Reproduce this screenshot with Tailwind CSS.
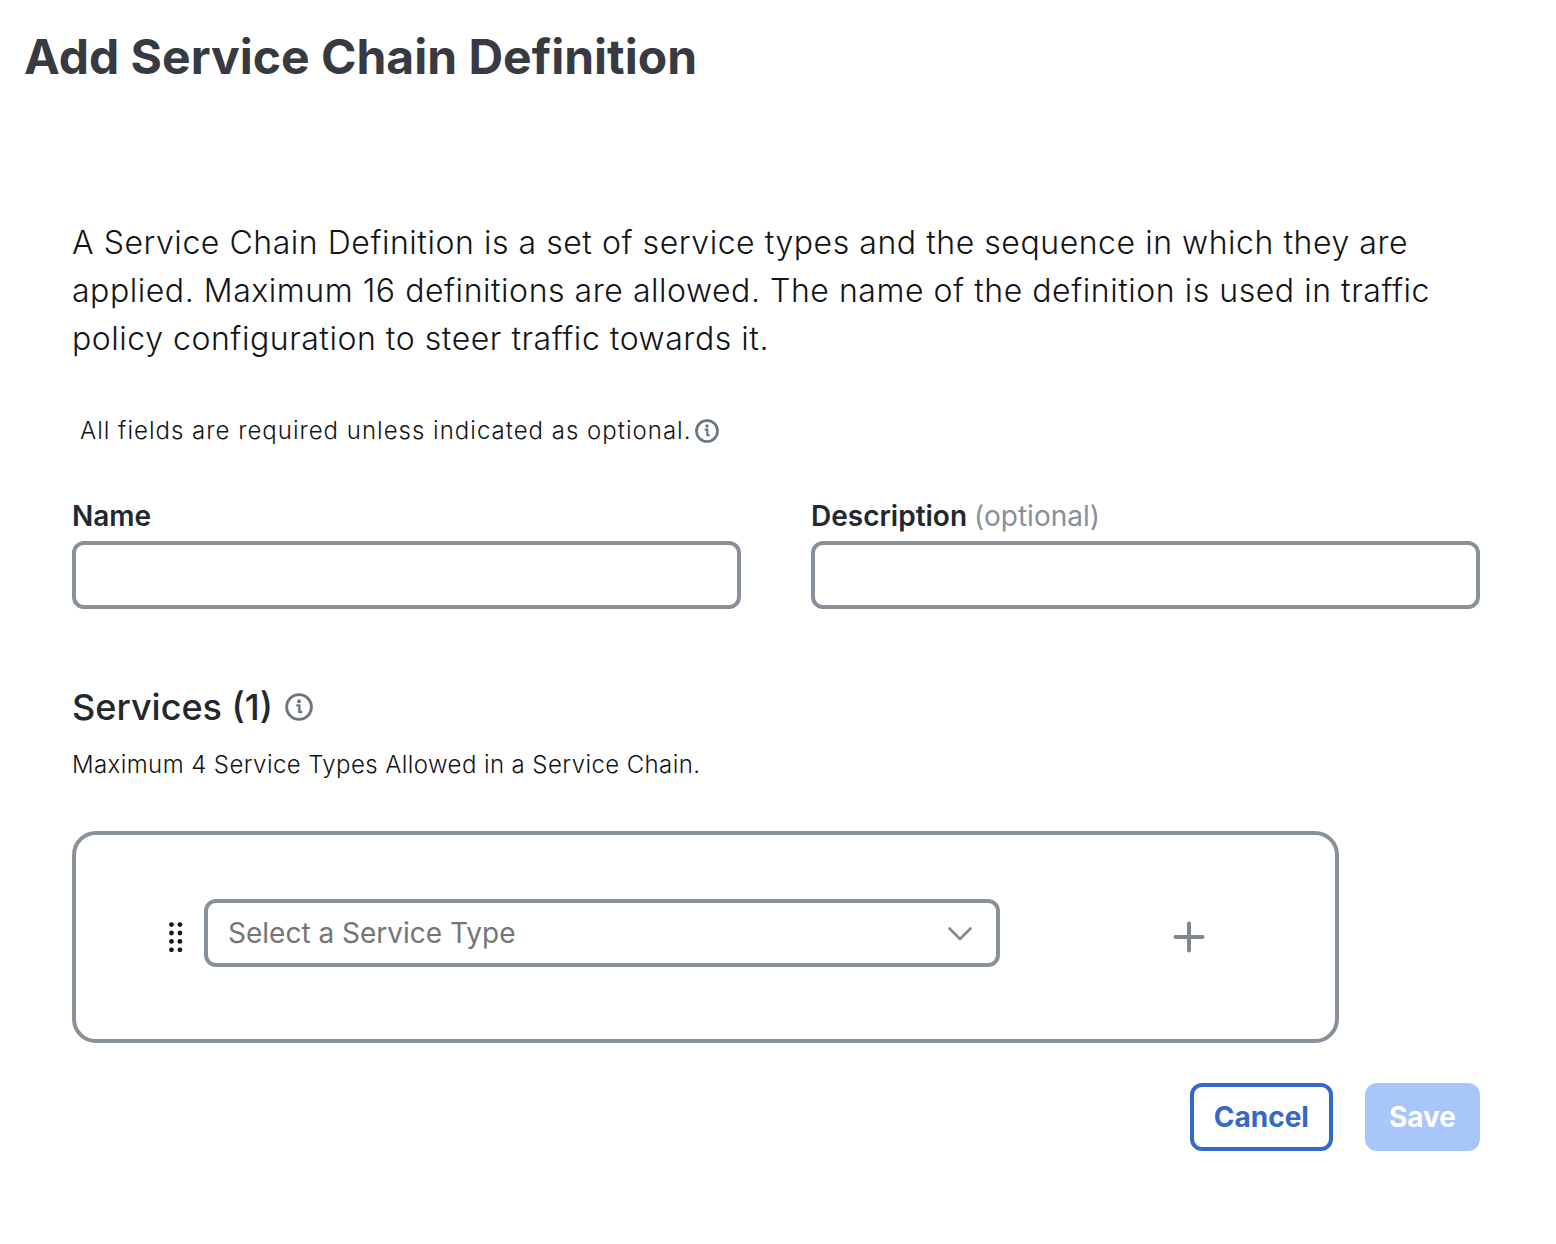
<!DOCTYPE html>
<html lang="en">
<head>
<meta charset="utf-8">
<title>Add Service Chain Definition</title>
<script src="https://cdn.jsdelivr.net/npm/@tailwindcss/browser@4"></script>
</head>
<body class="bg-white font-['Inter',sans-serif] text-[#23282e]">
<main>
  <h1 class="px-6 pt-7 text-5xl leading-[58px] font-bold text-[#373a41]">Add Service Chain Definition</h1>
  <form class="pt-[133px] pr-[76px] pb-[90px] pl-[72px]">
    <p class="text-[32px] leading-12 font-light tracking-[0.017em] text-[#121417]">A Service Chain Definition is a set of service types and the sequence in which they are applied. Maximum 16 definitions are allowed. The name of the definition is used in traffic policy configuration to steer traffic towards it.</p>
    <p class="mt-[50px] ml-2 flex items-center gap-1 text-2xl leading-9 font-light tracking-[1px] text-[#121417]">All fields are required unless indicated as optional.
      <svg class="size-6" viewBox="0 0 24 24" fill="none" stroke="#6c747d" stroke-width="2.7" aria-hidden="true"><circle cx="12" cy="12" r="10.5"/><path d="M10.5 10.6H12.3V16.2H13.9" stroke-width="2.1" stroke-linecap="round" stroke-linejoin="round"/><circle cx="12" cy="7" r="1.7" fill="#6c747d" stroke="none"/></svg>
    </p>
    <div class="mt-[47px] grid grid-cols-2 gap-[70px]">
      <div class="flex flex-col gap-[5px]">
        <label for="name" class="text-[28px] leading-10 font-semibold">Name</label>
        <input id="name" type="text" class="h-[68px] w-full rounded-xl border-4 border-[#889099] px-5 text-[28px]">
      </div>
      <div class="flex flex-col gap-[5px]">
        <label for="desc" class="text-[28px] leading-10 font-semibold">Description <span class="font-normal text-[#889099]">(optional)</span></label>
        <input id="desc" type="text" class="h-[68px] w-full rounded-xl border-4 border-[#889099] px-5 text-[28px]">
      </div>
    </div>
    <h2 class="mt-[74px] flex items-center gap-3 text-4xl leading-12 font-medium">Services (1)
      <svg class="size-7" viewBox="0 0 24 24" fill="none" stroke="#6c747d" stroke-width="2.5" aria-hidden="true"><circle cx="12" cy="12" r="10.6"/><path d="M10.5 10.6H12.3V16.2H13.9" stroke-width="2.1" stroke-linecap="round" stroke-linejoin="round"/><circle cx="12" cy="7" r="1.7" fill="#6c747d" stroke="none"/></svg>
    </h2>
    <p class="mt-4 text-2xl leading-9 font-light tracking-[0.017em] text-[#121417]">Maximum 4 Service Types Allowed in a Service Chain.</p>
    <div class="mt-12 mr-[141px] flex h-[212px] items-center rounded-3xl border-4 border-[#889099] pl-[92px]">
      <svg class="h-8 w-4 shrink-0" viewBox="0 0 16 32" fill="#121417" aria-hidden="true">
        <circle cx="3.5" cy="3.6" r="2.4"/><circle cx="11.9" cy="3.6" r="2.4"/>
        <circle cx="3.5" cy="12" r="2.4"/><circle cx="11.9" cy="12" r="2.4"/>
        <circle cx="3.5" cy="20.4" r="2.4"/><circle cx="11.9" cy="20.4" r="2.4"/>
        <circle cx="3.5" cy="28.8" r="2.4"/><circle cx="11.9" cy="28.8" r="2.4"/>
      </svg>
      <div class="ml-5 w-[796px] pb-2">
        <div class="relative">
          <select aria-label="Service type" class="block h-[68px] w-full appearance-none rounded-xl border-4 border-[#889099] px-5 text-[28px] text-[#757575]"><option>Select a Service Type</option></select>
          <svg class="pointer-events-none absolute top-5 right-6 h-7 w-8" viewBox="0 0 32 28" fill="none" stroke="#7f8790" stroke-width="2.6" stroke-linecap="round" stroke-linejoin="round" aria-hidden="true"><path d="M5.5 9.5 16 20 26.5 9.5"/></svg>
        </div>
      </div>
      <button type="button" aria-label="Add service" class="ml-[173px]">
        <svg class="block size-8" viewBox="0 0 32 32" fill="none" stroke="#7f8790" stroke-width="4" stroke-linecap="round" aria-hidden="true"><path d="M16 2.5v27M2.5 16h27"/></svg>
      </button>
    </div>
    <div class="mt-10 flex justify-end gap-8">
      <button type="button" class="h-[68px] rounded-xl border-4 border-[#3369c8] px-5 text-[28px] font-bold text-[#3369c8]">Cancel</button>
      <button type="submit" class="h-[68px] rounded-xl bg-[#a9c6fa] px-6 text-[28px] font-bold text-white">Save</button>
    </div>
  </form>
</main>
</body>
</html>
